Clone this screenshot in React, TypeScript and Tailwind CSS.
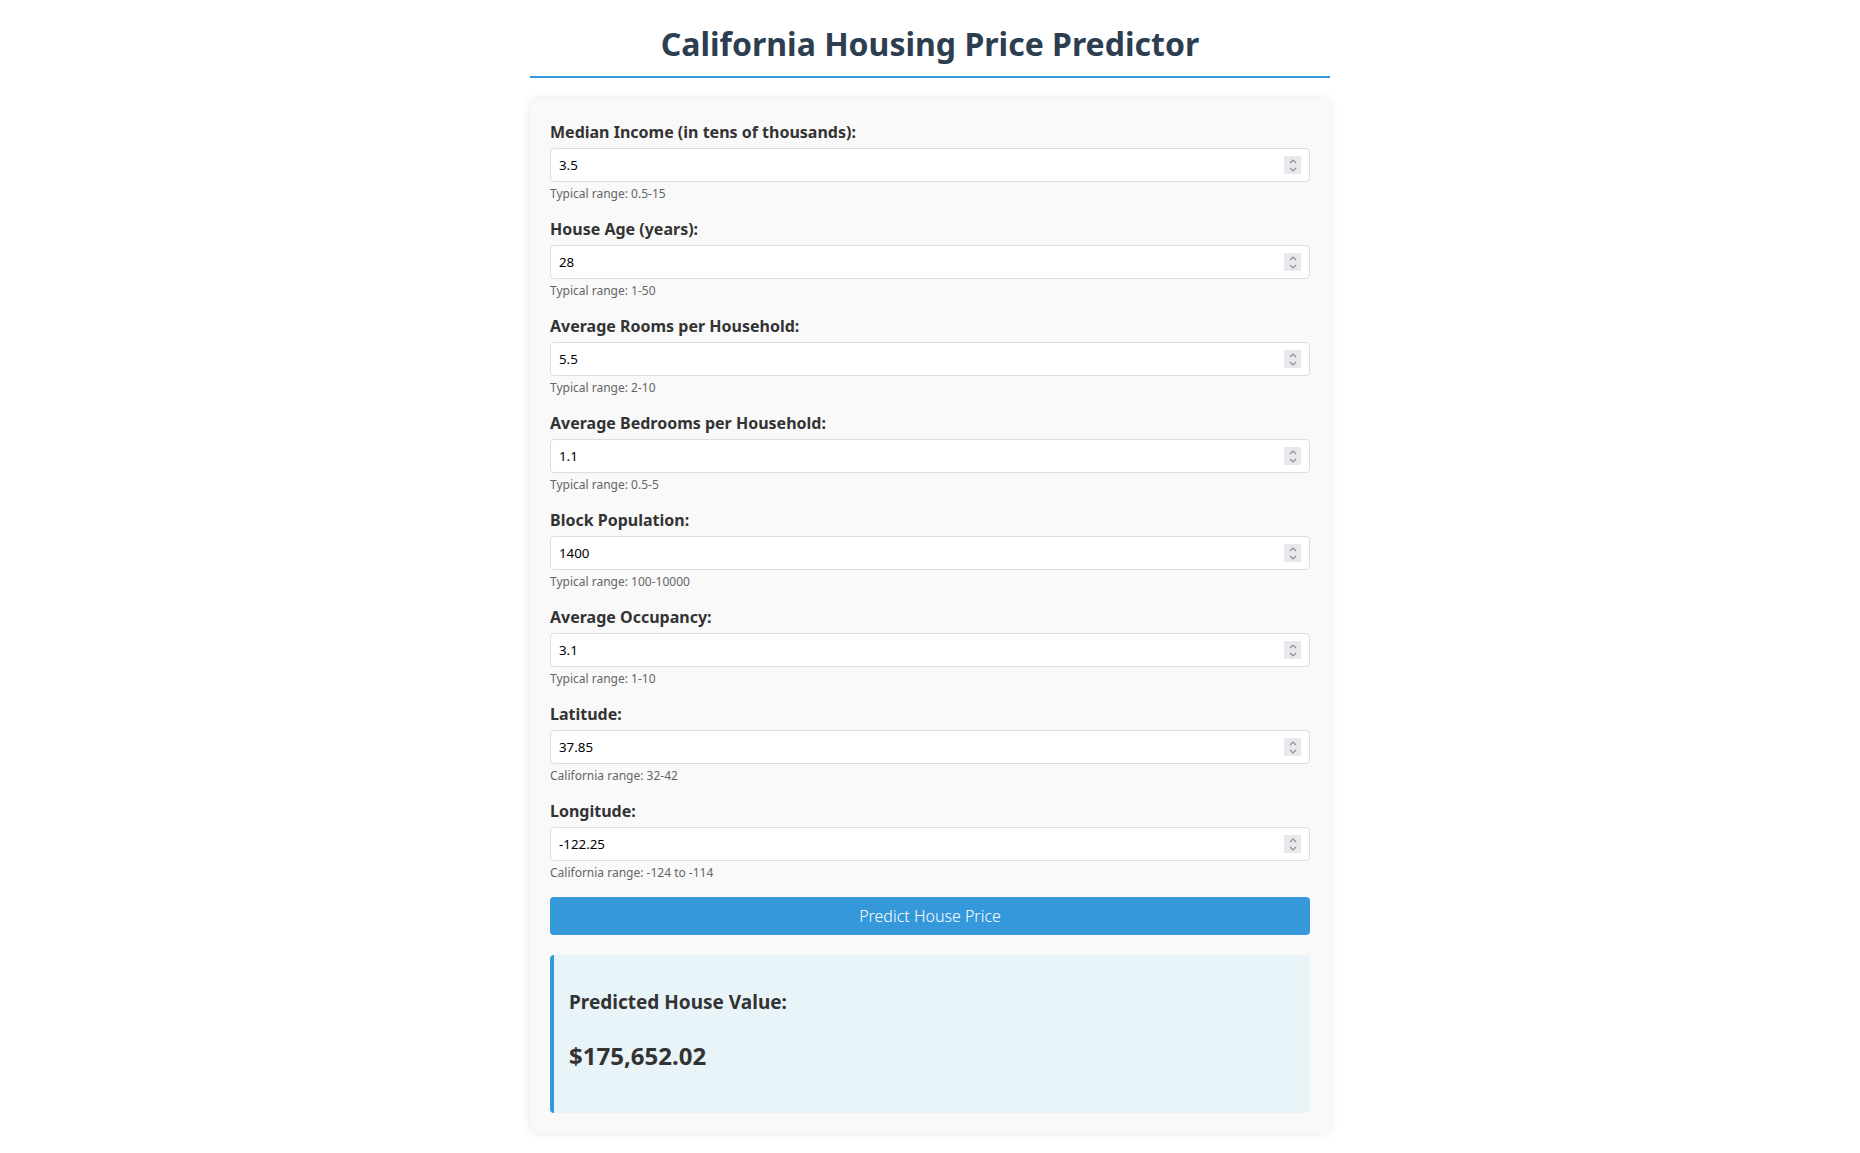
import { useState } from "react";

const fields = [
    { id: "MedInc", label: "Median Income (in tens of thousands):", value: "3.5", hint: "Typical range: 0.5-15" },
    { id: "HouseAge", label: "House Age (years):", value: "28", hint: "Typical range: 1-50" },
    { id: "AveRooms", label: "Average Rooms per Household:", value: "5.5", hint: "Typical range: 2-10" },
    { id: "AveBedrms", label: "Average Bedrooms per Household:", value: "1.1", hint: "Typical range: 0.5-5" },
    { id: "Population", label: "Block Population:", value: "1400", hint: "Typical range: 100-10000" },
    { id: "AveOccup", label: "Average Occupancy:", value: "3.1", hint: "Typical range: 1-10" },
    { id: "Latitude", label: "Latitude:", value: "37.85", hint: "California range: 32-42" },
    { id: "Longitude", label: "Longitude:", value: "-122.25", hint: "California range: -124 to -114" },
];

// chrome's little up/down spinner, drawn since headless hides it
const Spinner = () => (
    <div className="absolute right-[9px] top-[8px] w-[17px] h-[18px] bg-[#e9e9ed] flex flex-col items-center justify-center gap-[3px] pointer-events-none">
        <svg width="8" height="5" viewBox="0 0 8 5"><path d="M1 4L4 1L7 4" fill="none" stroke="#8e8e9a" strokeWidth="1.2" /></svg>
        <svg width="8" height="5" viewBox="0 0 8 5"><path d="M1 1L4 4L7 1" fill="none" stroke="#8e8e9a" strokeWidth="1.2" /></svg>
    </div>
)

export default function App() {
    const [values, setValues] = useState<any>(() => {
        const v: any = {}
        fields.forEach(f => { v[f.id] = f.value })
        return v
    })
    const [price] = useState("$175,652.02")

    return (
        <div className="min-h-[1153px] bg-white text-[#333] font-['Noto_Sans',sans-serif] pb-5">
            <div className="max-w-[800px] mx-auto">
                <h1 className="mt-[22px] mb-[21px] pb-[10px] border-b-2 border-[#3498db] text-center text-[32px] leading-[44px] font-bold text-[#2c3e50]">
                    California Housing Price Predictor
                </h1>
                <div className="bg-[#f9f9f9] rounded-lg px-5 pt-[22px] pb-5 shadow-[0_0_10px_rgba(0,0,0,0.1)]">
                    <form onSubmit={(e) => { e.preventDefault(); return false }}>
                        {fields.map(f => (
                            <div key={f.id} className="mb-[16px]">
                                <label htmlFor={f.id} className="block mb-[5px] text-base leading-[22px] font-bold text-[#333]">{f.label}</label>
                                <div className="relative">
                                    <input
                                        type="number"
                                        id={f.id}
                                        step="any"
                                        value={values[f.id]}
                                        onChange={(e) => setValues({ ...values, [f.id]: e.target.value })}
                                        className="block w-full h-[34px] px-2 bg-white border border-[#ddd] rounded text-[13.33px] text-black outline-none [appearance:textfield] [&::-webkit-inner-spin-button]:appearance-none [&::-webkit-outer-spin-button]:appearance-none"
                                    />
                                    <Spinner />
                                </div>
                                <small className="block mt-[4px] text-xs leading-4 text-[#666]">{f.hint}</small>
                            </div>
                        ))}
                        <button type="submit" className="block w-full h-[38px] bg-[#3498db] text-white text-base font-light rounded">
                            Predict House Price
                        </button>
                    </form>
                    <div className="mt-5 px-[15px] pt-[15px] pb-[15px] bg-[#e8f4f8] border-l-4 border-[#3498db] rounded">
                        <h3 className="mt-[19px] text-[19px] leading-[26px] font-bold text-[#333]">Predicted House Value:</h3>
                        <p className="mt-[24px] mb-[26px] text-2xl leading-[33px] font-bold text-[#333]">{price}</p>
                    </div>
                </div>
            </div>
        </div>
    );
}
